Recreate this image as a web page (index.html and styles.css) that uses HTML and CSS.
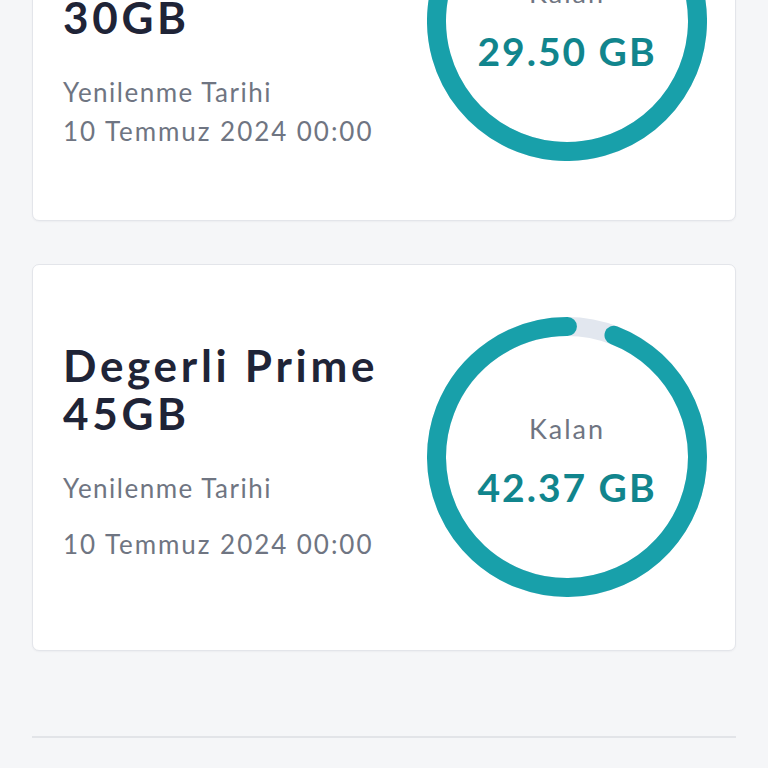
FILE: index.html
```html
<!DOCTYPE html>
<html lang="tr">
<head>
<meta charset="utf-8">
<title>Paketlerim</title>
<link rel="stylesheet" href="styles.css">
</head>
<body>
<main class="page">
  <section class="list">
    <article class="card card--first">
      <div class="info info--end">
        <h2 class="title">Degerli Prime<br>30GB</h2>
        <p class="label">Yenilenme Tarihi</p>
        <p class="date date--tight">10 Temmuz 2024 00:00</p>
      </div>
      <div class="ring">
        <svg class="ring-svg" width="280" height="280" viewBox="0 0 280 280">
          <circle class="track" cx="140" cy="140" r="130.5"/>
          <circle class="arc" cx="140" cy="140" r="130.5" stroke-dasharray="806.3 820" transform="rotate(-84 140 140)"/>
        </svg>
        <div class="ring-text">
          <span class="ring-label">Kalan</span>
          <span class="ring-value">29.50 GB</span>
        </div>
      </div>
    </article>

    <article class="card">
      <div class="info info--center">
        <h2 class="title">Degerli Prime<br>45GB</h2>
        <p class="label">Yenilenme Tarihi</p>
        <p class="date">10 Temmuz 2024 00:00</p>
      </div>
      <div class="ring">
        <svg class="ring-svg" width="280" height="280" viewBox="0 0 280 280">
          <circle class="track" cx="140" cy="140" r="130.5"/>
          <circle class="arc" cx="140" cy="140" r="130.5" stroke-dasharray="772 820" transform="rotate(-68.9 140 140)"/>
        </svg>
        <div class="ring-text">
          <span class="ring-label">Kalan</span>
          <span class="ring-value">42.37 GB</span>
        </div>
      </div>
    </article>
  </section>
  <hr class="divider">
</main>
</body>
</html>
```

FILE: styles.css
```css
* { box-sizing: border-box; }

html, body {
  margin: 0;
  padding: 0;
  background: #f5f6f8;
}

body {
  font-family: Lato, "Open Sans", "Liberation Sans", sans-serif;
  color: #1f2437;
  overflow: hidden;
}

.page {
  padding: 0 32px;
}

.list {
  display: flex;
  flex-direction: column;
  gap: 43px;
  margin-top: -172px;
}

.card {
  display: flex;
  align-items: center;
  background: #ffffff;
  border: 1.5px solid #e3e5ea;
  border-radius: 7px;
  padding: 52px 28px 53px 30px;
  box-shadow: 0 1px 2px rgba(20, 30, 50, 0.04);
}

.card--first {
  padding-bottom: 59px;
}

.info {
  flex: 1;
  display: flex;
  flex-direction: column;
}

.info--center {
  padding-bottom: 13px;
}

.info--end {
  align-self: flex-end;
  margin-bottom: 14px;
}

.title {
  margin: 0;
  font-size: 44px;
  line-height: 48px;
  font-weight: 700;
  letter-spacing: 3.7px;
  color: #1f2437;
}

.label,
.date {
  margin: 0;
  font-size: 26px;
  line-height: 32px;
  font-weight: 400;
  color: #6f7582;
}

.label {
  margin-top: 35px;
  letter-spacing: 1.5px;
}

.date {
  margin-top: 24px;
  letter-spacing: 1.95px;
}

.date--tight {
  margin-top: 7px;
}

.ring {
  display: grid;
  width: 280px;
  height: 280px;
  flex: none;
}

.ring-svg,
.ring-text {
  grid-area: 1 / 1;
}

.ring-svg {
  display: block;
}

.track {
  fill: none;
  stroke: #e2e7ef;
  stroke-width: 19;
}

.arc {
  fill: none;
  stroke: #18a0aa;
  stroke-width: 19;
  stroke-linecap: round;
}

.ring-text {
  display: flex;
  flex-direction: column;
  align-items: center;
  justify-content: center;
  padding-top: 7px;
}

.ring-label {
  font-size: 27px;
  line-height: 32px;
  letter-spacing: 2px;
  color: #6f7582;
}

.ring-value {
  margin-top: 20px;
  font-size: 39px;
  line-height: 44px;
  font-weight: 700;
  letter-spacing: 2px;
  color: #11858d;
}

.divider {
  margin: 85px 0 0;
  border: 0;
  height: 2px;
  background: #e2e4e8;
}
```
